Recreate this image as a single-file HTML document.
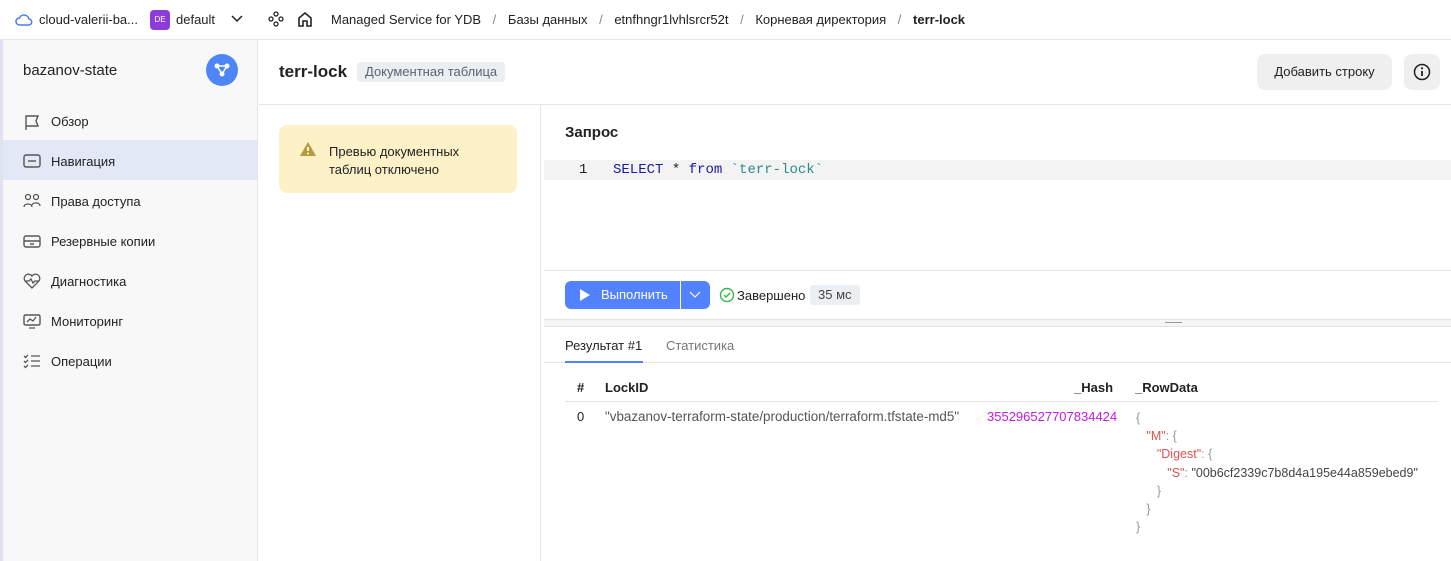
<!DOCTYPE html>
<html><head><meta charset="utf-8"><style>
*{box-sizing:border-box;margin:0;padding:0}
body{width:1451px;height:561px;overflow:hidden;font-family:"Liberation Sans","Noto Sans CJK SC",sans-serif;font-size:13px;color:#222;background:#fff;position:relative}
.a{position:absolute;white-space:nowrap}
.mono{font-family:"Liberation Mono",monospace}
</style></head><body>
<div class="a" style="left:0;top:0;width:1451px;height:40px;border-bottom:1px solid #e5e5e5"></div>
<svg class="a" style="left:15px;top:12px" width="18" height="16" viewBox="0 0 18 16"><path d="M4.5 13h9a3 3 0 0 0 .4-6A5 5 0 0 0 4.4 6 3.5 3.5 0 0 0 4.5 13z" fill="none" stroke="#4a7ee8" stroke-width="1.5"/></svg>
<div class="a" style="left:39px;top:12px;font-size:13px">cloud-valerii-ba...</div>
<div class="a" style="left:150px;top:10px;width:20px;height:20px;background:#8e3bdc;border-radius:4px;color:#fff;font-size:8px;text-align:center;line-height:20px">DE</div>
<div class="a" style="left:176px;top:12px">default</div>
<svg class="a" style="left:231px;top:15px" width="12" height="8"><path d="M1 1l5 5 5-5" fill="none" stroke="#222" stroke-width="1.5"/></svg>
<svg class="a" style="left:268px;top:11px" width="16" height="16"><g fill="none" stroke="#222" stroke-width="1.3"><circle cx="8" cy="3" r="2"/><circle cx="3" cy="8" r="2"/><circle cx="13" cy="8" r="2"/><circle cx="8" cy="13" r="2"/></g></svg>
<svg class="a" style="left:297px;top:11px" width="16" height="17"><path d="M2 15V7l6-5 6 5v8H10v-5H6v5z" fill="none" stroke="#222" stroke-width="1.6"/></svg>
<div class="a" style="left:331px;top:12px">Managed Service for YDB <span style="color:#888;margin:0 8px">/</span> Базы данных <span style="color:#888;margin:0 8px">/</span> etnfhngr1lvhlsrcr52t <span style="color:#888;margin:0 8px">/</span> Корневая директория <span style="color:#888;margin:0 8px">/</span> <b style="font-weight:600">terr-lock</b></div>
<div class="a" style="left:0;top:40px;width:3px;height:521px;background:#dfe3ee"></div>
<div class="a" style="left:3px;top:40px;width:255px;height:521px;background:#f8f8f8;border-right:1px solid #e5e5e5"></div>
<div class="a" style="left:23px;top:62px;font-size:15px">bazanov-state</div>
<div class="a" style="left:206px;top:54px;width:32px;height:32px;border-radius:50%;background:#4f86f7"></div>
<svg class="a" style="left:213px;top:61px" width="18" height="18"><g fill="#fff"><circle cx="4" cy="5" r="2.5"/><circle cx="14" cy="5" r="2.5"/><circle cx="9" cy="13" r="2.5"/></g><path d="M4 5h10M4 5l5 8M14 5l-5 8" stroke="#fff" stroke-width="1.5"/></svg>
<div class="a" style="left:3px;top:140px;width:255px;height:40px;background:#e3e8f7"></div>
<svg class="a" style="left:23px;top:113px" width="18" height="18"><path d="M3 17V3h12l-2 5 2 5H3" fill="none" stroke="#555" stroke-width="1.4"/></svg>
<svg class="a" style="left:23px;top:153px" width="18" height="16"><rect x="1" y="2" width="16" height="12" rx="2" fill="none" stroke="#555" stroke-width="1.4"/><path d="M5 8h8" stroke="#555" stroke-width="1.4"/></svg>
<svg class="a" style="left:23px;top:193px" width="18" height="16"><g fill="none" stroke="#555" stroke-width="1.3"><circle cx="5" cy="4" r="2.5"/><circle cx="13" cy="4" r="2.5"/><path d="M1 14c0-4 8-4 8 0M9 12c1-3 8-3 8 1"/></g></svg>
<svg class="a" style="left:23px;top:233px" width="18" height="16"><rect x="1" y="3" width="16" height="11" rx="2" fill="none" stroke="#555" stroke-width="1.4"/><path d="M1 8h16M7 11h4" stroke="#555" stroke-width="1.4"/></svg>
<svg class="a" style="left:23px;top:273px" width="18" height="16"><path d="M9 15L2 8a4 4 0 0 1 7-5 4 4 0 0 1 7 5zM2 8h4l2-2 2 4 2-2h4" fill="none" stroke="#555" stroke-width="1.3"/></svg>
<svg class="a" style="left:23px;top:313px" width="18" height="16"><rect x="1" y="2" width="16" height="10" rx="1.5" fill="none" stroke="#555" stroke-width="1.4"/><path d="M4 9l3-3 3 2 3-4M6 15h6" fill="none" stroke="#555" stroke-width="1.3"/></svg>
<svg class="a" style="left:23px;top:353px" width="18" height="16"><path d="M1 3l1.5 1.5L5 2M1 8l1.5 1.5L5 7M1 13l1.5 1.5L5 12M8 3h9M8 8h9M8 13h9" fill="none" stroke="#555" stroke-width="1.3"/></svg>
<div class="a" style="left:51px;top:114px">Обзор</div>
<div class="a" style="left:51px;top:154px">Навигация</div>
<div class="a" style="left:51px;top:194px">Права доступа</div>
<div class="a" style="left:51px;top:234px">Резервные копии</div>
<div class="a" style="left:51px;top:274px">Диагностика</div>
<div class="a" style="left:51px;top:314px">Мониторинг</div>
<div class="a" style="left:51px;top:354px">Операции</div>
<div class="a" style="left:259px;top:104px;width:1192px;height:1px;background:#e5e5e5"></div>
<div class="a" style="left:279px;top:62px;font-size:17px;font-weight:600">terr-lock</div>
<div class="a" style="left:357px;top:62px;height:20px;padding:0 8px;background:#eceff2;border-radius:3px;color:#5b6370;line-height:20px;font-size:13px">Документная таблица</div>
<div class="a" style="left:1257px;top:54px;width:135px;height:36px;background:#efefef;border-radius:8px;text-align:center;line-height:36px">Добавить строку</div>
<div class="a" style="left:1404px;top:54px;width:36px;height:36px;background:#efefef;border-radius:8px"></div>
<svg class="a" style="left:1413px;top:63px" width="18" height="18"><circle cx="9" cy="9" r="7.5" fill="none" stroke="#222" stroke-width="1.5"/><path d="M9 8v5" stroke="#222" stroke-width="1.8"/><circle cx="9" cy="5.3" r="1.1" fill="#222"/></svg>
<div class="a" style="left:279px;top:125px;width:238px;height:68px;background:#fdf1c7;border-radius:8px"></div>
<svg class="a" style="left:299px;top:141px" width="18" height="16"><path d="M9 1L17 15H1z" fill="#b89a3a"/><path d="M9 6v4" stroke="#fff" stroke-width="1.8"/><circle cx="9" cy="12.5" r="1" fill="#fff"/></svg>
<div class="a" style="left:329px;top:143px;line-height:18px">Превью документных<br>таблиц отключено</div>
<div class="a" style="left:540px;top:104px;width:1px;height:457px;background:#e5e5e5"></div>
<div class="a" style="left:565px;top:124px;font-size:15px;font-weight:600">Запрос</div>
<div class="a" style="left:544px;top:160px;width:907px;height:20px;background:#f3f3f3"></div>
<div class="a mono" style="left:579px;top:162px;font-size:14px;color:#222">1</div>
<div class="a mono" style="left:613px;top:162px;font-size:14px"><span style="color:#1a1aa6">SELECT</span> * <span style="color:#1a1aa6">from</span> <span style="color:#2c8a8a">`terr-lock`</span></div>
<div class="a" style="left:544px;top:270px;width:907px;height:1px;background:#e5e5e5"></div>
<div class="a" style="left:565px;top:281px;width:115px;height:28px;background:#5282ff;border-radius:6px 0 0 6px;color:#fff;line-height:28px;padding-left:36px">Выполнить</div>
<svg class="a" style="left:579px;top:288px" width="12" height="14"><path d="M1 1l10 6-10 6z" fill="#fff"/></svg>
<div class="a" style="left:681px;top:281px;width:29px;height:28px;background:#5282ff;border-radius:0 6px 6px 0"></div>
<svg class="a" style="left:689px;top:291px" width="12" height="8"><path d="M1 1l5 5 5-5" fill="none" stroke="#fff" stroke-width="1.2"/></svg>
<svg class="a" style="left:719px;top:287px" width="16" height="16"><circle cx="8" cy="8" r="6.5" fill="none" stroke="#3bb54a" stroke-width="1.4"/><path d="M5 8l2 2 4-4" fill="none" stroke="#3bb54a" stroke-width="1.4"/></svg>
<div class="a" style="left:737px;top:288px">Завершено</div>
<div class="a" style="left:810px;top:285px;height:20px;padding:0 8px;background:#eceff2;border-radius:3px;line-height:20px;color:#444">35 мс</div>
<div class="a" style="left:544px;top:319px;width:907px;height:8px;background:#f5f5f5;border-top:1px solid #e3e3e3;border-bottom:1px solid #e3e3e3"></div>
<div class="a" style="left:1165px;top:322px;width:17px;height:1px;background:#999"></div>
<div class="a" style="left:565px;top:338px">Результат #1</div>
<div class="a" style="left:666px;top:338px;color:#777">Статистика</div>
<div class="a" style="left:544px;top:362px;width:907px;height:1px;background:#e5e5e5"></div>
<div class="a" style="left:565px;top:361px;width:78px;height:2px;background:#5282ff"></div>
<div class="a" style="left:577px;top:380px;font-weight:600">#</div>
<div class="a" style="left:605px;top:380px;font-weight:600">LockID</div>
<div class="a" style="left:1074px;top:380px;font-weight:600">_Hash</div>
<div class="a" style="left:1135px;top:380px;font-weight:600">_RowData</div>
<div class="a" style="left:565px;top:401px;width:873px;height:1px;background:#e5e5e5"></div>
<div class="a" style="left:577px;top:409px">0</div>
<div class="a" style="left:605px;top:409px;color:#555;font-size:13.4px">"vbazanov-terraform-state/production/terraform.tfstate-md5"</div>
<div class="a" style="left:987px;top:409px;color:#c21be0">355296527707834424</div>
<div class="a" style="left:1136px;top:409px;line-height:18.2px;color:#999;font-size:12.5px">{<br>&nbsp;&nbsp;&nbsp;<span style="color:#d9534f">"M"</span>: {<br>&nbsp;&nbsp;&nbsp;&nbsp;&nbsp;&nbsp;<span style="color:#d9534f">"Digest"</span>: {<br>&nbsp;&nbsp;&nbsp;&nbsp;&nbsp;&nbsp;&nbsp;&nbsp;&nbsp;<span style="color:#d9534f">"S"</span>: <span style="color:#444">"00b6cf2339c7b8d4a195e44a859ebed9"</span><br>&nbsp;&nbsp;&nbsp;&nbsp;&nbsp;&nbsp;}<br>&nbsp;&nbsp;&nbsp;}<br>}</div>
</body></html>
